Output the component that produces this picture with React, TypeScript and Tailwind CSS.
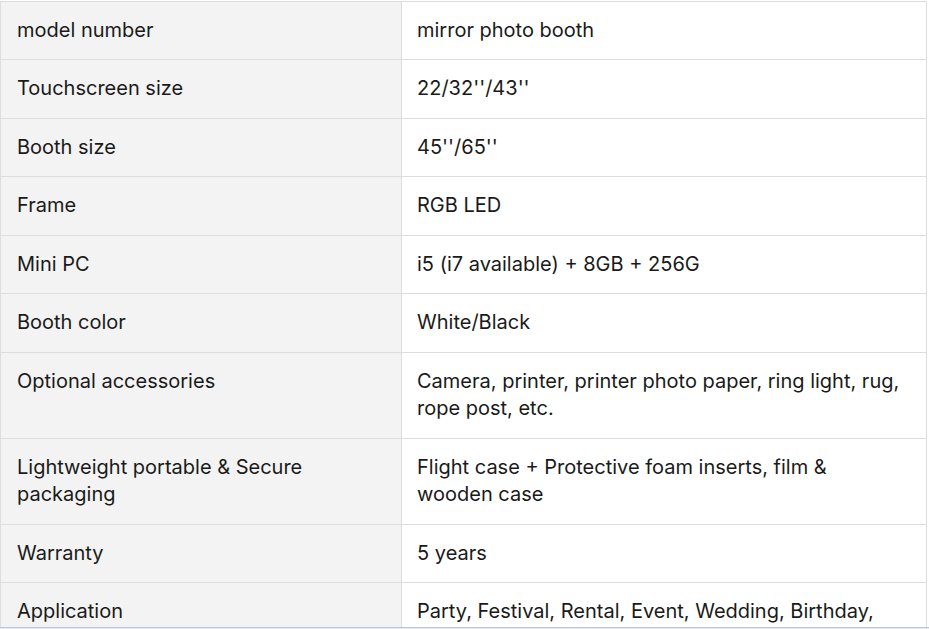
import React from 'react';

const rows: [string, string][] = [
  ['model number', 'mirror photo booth'],
  ['Touchscreen size', '22/32\'\'/43\'\''],
  ['Booth size', '45\'\'/65\'\''],
  ['Frame', 'RGB LED'],
  ['Mini PC', 'i5 (i7 available) + 8GB + 256G'],
  ['Booth color', 'White/Black'],
  ['Optional accessories', 'Camera, printer, printer photo paper, ring light, rug, rope post, etc.'],
  ['Lightweight portable & Secure packaging', 'Flight case + Protective foam inserts, film & wooden case'],
  ['Warranty', '5 years'],
  ['Application', 'Party, Festival, Rental, Event, Wedding, Birthday, Corporate events, etc.'],
];

export default function App() {
  return (
    <div className="h-[629px] w-[929px] overflow-hidden bg-white flex flex-col" style={{ fontFamily: 'Inter, "Noto Sans", sans-serif' }}>
      <div className="h-[627px] overflow-hidden pt-[0.5px]">
        <table className="w-[927px] border-collapse text-[20px] leading-[27.5px] text-[#1a1a1a]">
          <tbody>
            {rows.map(([k, v]) => (
              <tr key={k}>
                <td className="w-[401px] border border-[#dddddd] bg-[#f3f3f3] pl-[16px] pr-[15px] py-[15px] align-top">{k}</td>
                <td className="border border-[#dddddd] bg-white pl-[15px] pr-[22px] py-[15px] align-top">{v}</td>
              </tr>
            ))}
          </tbody>
        </table>
      </div>
      <div className="h-px bg-[#bcc6d2]" />
      <div className="h-px bg-[#e3ebf5]" />
    </div>
  );
}
